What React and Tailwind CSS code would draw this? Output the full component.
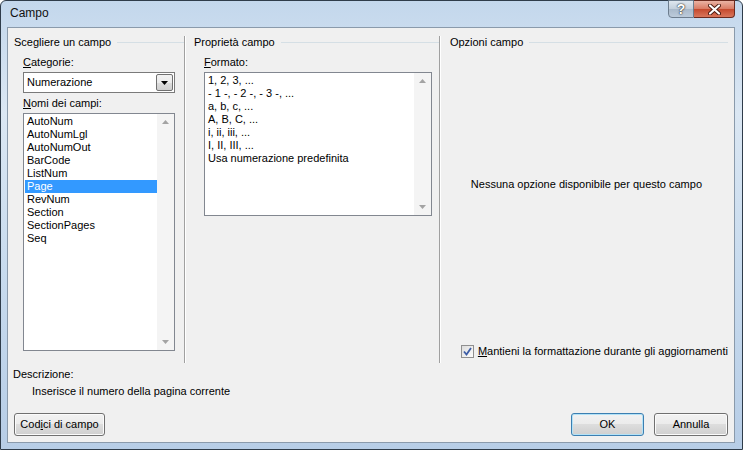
import React from "react";

const font = { fontFamily: '"Liberation Sans", "Noto Sans", sans-serif' };

const campi = [
  "AutoNum",
  "AutoNumLgl",
  "AutoNumOut",
  "BarCode",
  "ListNum",
  "Page",
  "RevNum",
  "Section",
  "SectionPages",
  "Seq",
];

const formati = [
  "1, 2, 3, ...",
  "- 1 -, - 2 -, - 3 -, ...",
  "a, b, c, ...",
  "A, B, C, ...",
  "i, ii, iii, ...",
  "I, II, III, ...",
  "Usa numerazione predefinita",
];

const GroupHeader = ({ title, pl }) => (
  <div className={`flex items-center h-[13px] ${pl}`}>
    <span className="whitespace-nowrap">{title}</span>
    <div className="flex-1 ml-[6px] h-px bg-[#d5dfe5]" />
  </div>
);

const Arrow = ({ up, dark }) => (
  <svg width="7" height="4" viewBox="0 0 7 4">
    <path
      d={up ? "M0 4 L3.5 0 L7 4 Z" : "M0 0 L7 0 L3.5 4 Z"}
      fill={dark ? "#000" : "#a3a3a3"}
    />
  </svg>
);

const ScrollBar = () => (
  <div className="w-[17px] h-full flex flex-col justify-between items-center bg-[#f4f4f4] py-[6px]">
    <Arrow up />
    <Arrow />
  </div>
);

const ListBox = ({ items, selected, h, w }) => (
  <div className={`${h} ${w} flex border border-[#828790] bg-white`}>
    <div className="flex-1 pt-[1px] pl-[1px]">
      {items.map((it) => (
        <div
          key={it}
          className={`h-[13px] leading-[13px] pl-[2px] whitespace-nowrap ${
            it === selected ? "bg-[#3399ff] text-white" : ""
          }`}
        >
          {it}
        </div>
      ))}
    </div>
    <ScrollBar />
  </div>
);

const Button = ({ children, def, w }) => (
  <div
    className={`${w} h-[23px] flex items-center justify-center rounded-[3px] border ${
      def
        ? "border-[#3c7fb1] shadow-[inset_0_0_0_1px_#b3e2f7]"
        : "border-[#707070] shadow-[inset_0_0_0_1px_#fbfbfb]"
    } bg-[linear-gradient(#f2f2f2_0%,#ebebeb_50%,#dddddd_50%,#cfcfcf_100%)]`}
  >
    {children}
  </div>
);

export default function App() {
  return (
    <div
      className="w-[743px] h-[450px] text-[11px] leading-[13px] text-black overflow-hidden"
      style={font}
    >
      <div className="w-full h-full flex flex-col rounded-t-[6px] border border-[#2f3c4a] bg-[linear-gradient(180deg,#c3d7ec_0%,#dbe7f3_25%,#c8dbee_60%,#b7cde6_100%)] pl-[6px] pr-[7px] pb-[6px]">
        {/* title bar */}
        <div className="h-[26px] flex items-start">
          <div className="pt-[6px] pl-[3px] text-[12px] text-[#111]">Campo</div>
          <div className="flex-1" />
          <div className="flex h-[18px] -mt-px">
            <div className="w-[26px] h-full flex items-center justify-center border border-[#6d7d8e] rounded-bl-[4px] bg-[linear-gradient(#dfe7ef_0%,#c3cfdb_50%,#a9b9ca_50%,#bccbdb_100%)] text-white font-bold text-[14px] [text-shadow:0_0_1px_#222,0_0_2px_#222]">
              ?
            </div>
            <div className="w-[41px] h-full flex items-center justify-center border border-l-0 border-[#6b2a1e] rounded-br-[4px] bg-[linear-gradient(#eab3a4_0%,#d97a63_50%,#c4482c_50%,#d9765b_100%)]">
              <svg width="13" height="11" viewBox="0 0 13 11">
                <path
                  d="M2 1.5 L11 9.5 M11 1.5 L2 9.5"
                  stroke="#4a1a10"
                  strokeWidth="4"
                  strokeLinecap="round"
                />
                <path
                  d="M2 1.5 L11 9.5 M11 1.5 L2 9.5"
                  stroke="#fff"
                  strokeWidth="2.2"
                  strokeLinecap="round"
                />
              </svg>
            </div>
          </div>
        </div>

        {/* client area */}
        <div className="flex-1 flex flex-col bg-[#f0f0f0] border border-[#8a9aab]">
          <div className="flex h-[327px] mt-[8px]">
            {/* column 1 */}
            <div className="w-[177px] flex flex-col">
              <GroupHeader title="Scegliere un campo" pl="pl-[6px]" />
              <div className="pl-[15px] pr-[9px] flex flex-col">
                <div className="mt-[7px] h-[13px]">
                  <span className="underline">C</span>ategorie:
                </div>
                <div className="mt-[3px] w-[152px] h-[21px] flex border border-[#7a7a7a] bg-white">
                  <div className="flex-1 pl-[3px] flex items-center">Numerazione</div>
                  <div className="w-[17px] m-px flex items-center justify-center border border-[#707070] rounded-[2px] bg-[linear-gradient(#f2f2f2_0%,#ebebeb_50%,#dddddd_50%,#cfcfcf_100%)]">
                    <Arrow dark />
                  </div>
                </div>
                <div className="mt-[4px] h-[13px]">
                  <span className="underline">N</span>omi dei campi:
                </div>
                <div className="mt-[3px]">
                  <ListBox items={campi} selected="Page" h="h-[238px]" w="w-[152px]" />
                </div>
              </div>
            </div>
            <div className="w-px bg-[#a0a0a0] border-r border-white box-content" />

            {/* column 2 */}
            <div className="w-[255px] flex flex-col">
              <GroupHeader title="Proprietà campo" pl="pl-[8px]" />
              <div className="pl-[18px] flex flex-col">
                <div className="mt-[7px] h-[13px]">
                  <span className="underline">F</span>ormato:
                </div>
                <div className="mt-[3px]">
                  <ListBox items={formati} h="h-[144px]" w="w-[228px]" />
                </div>
              </div>
            </div>
            <div className="w-px bg-[#a0a0a0] border-r border-white box-content" />

            {/* column 3 */}
            <div className="flex-1 flex flex-col pr-[6px]">
              <GroupHeader title="Opzioni campo" pl="pl-[9px]" />
              <div className="mt-[129px] h-[13px] text-center pl-[4px]">
                Nessuna opzione disponibile per questo campo
              </div>
              <div className="flex-1" />
              <div className="flex items-center pl-[20px] mb-[5px] h-[14px]">
                <div className="w-[13px] h-[13px] border border-[#8f8f8f] bg-[linear-gradient(135deg,#dcdcdc,#fdfdfd)] flex items-center justify-center">
                  <svg width="9" height="9" viewBox="0 0 9 9">
                    <path
                      d="M1 4.5 L3.5 7.5 L8 1"
                      stroke="#3d5da6"
                      strokeWidth="1.8"
                      fill="none"
                    />
                  </svg>
                </div>
                <div className="ml-[4px] whitespace-nowrap">
                  <span className="underline">M</span>antieni la formattazione durante gli aggiornamenti
                </div>
              </div>
            </div>
          </div>

          {/* description */}
          <div className="pl-[5px] mt-[5px] h-[13px]">Descrizione:</div>
          <div className="pl-[24px] mt-[4px] h-[13px]">
            Inserisce il numero della pagina corrente
          </div>

          {/* buttons */}
          <div className="flex items-center mt-[15px] px-[6px]">
            <Button w="w-[91px]">
              Cod<span className="underline">i</span>ci di campo
            </Button>
            <div className="flex-1" />
            <Button def w="w-[73px]">
              OK
            </Button>
            <div className="w-[10px]" />
            <Button w="w-[74px]">Annulla</Button>
          </div>
        </div>
      </div>
    </div>
  );
}
